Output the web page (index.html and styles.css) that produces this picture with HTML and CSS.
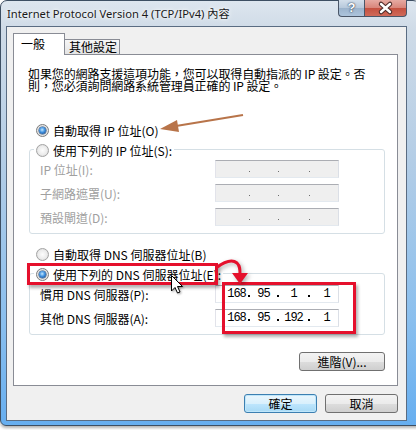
FILE: index.html
```html
<!DOCTYPE html>
<html lang="zh-Hant">
<head>
  <meta charset="UTF-8">
  <title>Internet Protocol Version 4 (TCP/IPv4) 內容</title>
  <link rel="stylesheet" href="styles.css">
</head>
<body>

  <div class="window">
    <div class="titlebar">
      <span class="title">Internet Protocol Version 4 (TCP/IPv4) 內容</span>
      <div class="caption-btns">
        <div class="cap help">?</div>
        <div class="cap close">
          <svg width="41" height="16" viewBox="0 0 41 16">
            <path d="M16 4 L25 12 M25 4 L16 12" stroke="#4a2a28" stroke-width="4.5" stroke-linecap="round"/>
            <path d="M16 4 L25 12 M25 4 L16 12" stroke="#fff" stroke-width="2.4" stroke-linecap="round"/>
          </svg>
        </div>
      </div>
    </div>

    <div class="client">
      <div class="tabs">
        <div class="tab active">一般</div>
        <div class="tab">其他設定</div>
      </div>

      <div class="panel">
        <div class="desc">
          <div class="line">如果您的網路支援這項功能，您可以取得自動指派的 IP 設定。否</div>
          <div class="line">則，您必須詢問網路系統管理員正確的 IP 設定。</div>
        </div>

        <div class="radio-row first"><span class="radio on"></span>自動取得 IP 位址(O)</div>

        <div class="group">
          <div class="legend"><span class="radio"></span>使用下列的 IP 位址(S):</div>
          <div class="field off">
            <span class="label">IP 位址(I):</span>
            <div class="ipbox"><span class="seg s1"></span><i></i><span class="seg s2"></span><i></i><span class="seg s3"></span><i></i><span class="seg s4"></span></div>
          </div>
          <div class="field off">
            <span class="label">子網路遮罩(U):</span>
            <div class="ipbox"><span class="seg s1"></span><i></i><span class="seg s2"></span><i></i><span class="seg s3"></span><i></i><span class="seg s4"></span></div>
          </div>
          <div class="field off">
            <span class="label">預設閘道(D):</span>
            <div class="ipbox"><span class="seg s1"></span><i></i><span class="seg s2"></span><i></i><span class="seg s3"></span><i></i><span class="seg s4"></span></div>
          </div>
        </div>

        <div class="radio-row dns-auto"><span class="radio"></span>自動取得 DNS 伺服器位址(B)</div>

        <div class="group dns">
          <div class="legend"><span class="radio on"></span>使用下列的 DNS 伺服器位址(E):</div>
          <div class="field">
            <span class="label">慣用 DNS 伺服器(P):</span>
            <div class="ipbox"><span class="seg s1">168</span><i></i><span class="seg s2">95</span><i></i><span class="seg s3">1</span><i></i><span class="seg s4">1</span></div>
          </div>
          <div class="field">
            <span class="label">其他 DNS 伺服器(A):</span>
            <div class="ipbox"><span class="seg s1">168</span><i></i><span class="seg s2">95</span><i></i><span class="seg s3">192</span><i></i><span class="seg s4">1</span></div>
          </div>
        </div>

        <div class="adv-row"><button class="btn adv">進階(V)...</button></div>
      </div>

      <div class="dialog-btns">
        <button class="btn default">確定</button>
        <button class="btn">取消</button>
      </div>
    </div>
  </div>

  <!-- annotations drawn over the dialog -->
  <div class="mark mark-radio"></div>
  <div class="mark mark-dns"></div>
  <svg class="overlay" width="416" height="430" viewBox="0 0 416 430">
    <g class="red-arrow">
      <path d="M216 268 C224 262 232 259 237 263 C240 266 240 269 240 274" fill="none" stroke="#e5102c" stroke-width="3"/>
      <polygon points="232,273 248,273 240,284" fill="#e5102c"/>
    </g>
    <g class="brown-arrow">
      <path d="M243 115 L176 126" stroke="#b8744a" stroke-width="2.2"/>
      <polygon points="160,129 179,132 177,120" fill="#b8744a"/>
    </g>
    <path class="cursor" d="M171.5 275.5 L171.5 291 L175 287.5 L177.5 293 L180 292 L177.5 286.5 L182.5 286.5 Z" fill="#fff" stroke="#000" stroke-width="1"/>
  </svg>

</body>
</html>
```

FILE: styles.css
```css
* { box-sizing: border-box; }

body {
  margin: 0;
  width: 416px;
  height: 430px;
  overflow: hidden;
  position: relative;
  background: #fff;
  font-family: "Noto Sans CJK TC", sans-serif;
  font-size: 12px;
  color: #000;
}

.window {
  width: 420px;
  height: 426px;
  border: 1px solid #3d4f63;
  border-radius: 7px 7px 0 6px;
  background: linear-gradient(to bottom, #dde6ef 0, #cfdbe7 28px, #b3cde6 160px, #8abfee 320px, #66aef0 426px);
  box-shadow: 0 2px 3px rgba(0,0,0,0.3);
  display: flex;
  flex-direction: column;
}

.titlebar {
  height: 25px;
  display: flex;
  align-items: flex-start;
}
.title {
  padding-left: 6px;
  line-height: 25px;
  font-family: "Noto Sans", "Noto Sans CJK TC", sans-serif;
  font-size: 11.2px;
  color: #1a1a1a;
  text-shadow: 0 0 6px #fff, 0 0 3px #fff;
}
.caption-btns {
  margin-left: auto;
  margin-right: 12px;
  margin-top: -1px;
  display: flex;
  height: 17px;
}
.cap {
  height: 17px;
  border: 1px solid #4a5668;
  border-top: none;
}
.cap.help {
  width: 26px;
  border-radius: 0 0 0 4px;
  border-right: none;
  background: linear-gradient(#d3dfeb 0, #b6c8db 50%, #9bb3cc 51%, #adc4dc 100%);
  color: #fff;
  font-family: "Liberation Sans", sans-serif;
  font-weight: bold;
  font-size: 13px;
  line-height: 16px;
  text-align: center;
  text-shadow: 0 0 2px #2c3e55, 0 0 1px #2c3e55;
}
.cap.close {
  width: 43px;
  border-radius: 0 0 4px 0;
  background: linear-gradient(#e6aaa2 0, #d88479 50%, #c4503f 51%, #d06a5a 100%);
}
.cap.close svg { display: block; }

.client {
  width: 401px;
  height: 395px;
  margin: 0 12px 0 5px;
  border: 1px solid #5a6c82;
  background: #f0f0f0;
  padding: 6px 8px 0 6px;
}

.tabs {
  display: flex;
  align-items: flex-end;
  height: 21px;
}
.tab {
  border: 1px solid #898c95;
  border-bottom: none;
}
.tab.active {
  position: relative;
  z-index: 1;
  width: 52px;
  height: 22px;
  margin-bottom: -1px;
  padding-left: 7px;
  line-height: 19px;
  background: #fff;
}
.tab:not(.active) {
  width: 56px;
  height: 15px;
  margin-left: -1px;
  padding-left: 4px;
  line-height: 13px;
  background: linear-gradient(#f6f6f6, #e4e4e4);
}

.panel {
  width: 385px;
  height: 332px;
  border: 1px solid #898c95;
  background: #fff;
  padding-left: 14px;
}

.desc {
  margin-top: 13px;
  letter-spacing: -0.1px;
}
.desc .line {
  height: 12px;
  line-height: 12px;
  white-space: nowrap;
}

.radio-row,
.legend {
  display: flex;
  align-items: center;
  gap: 4px;
  height: 14px;
  white-space: nowrap;
}
.radio-row { padding-left: 8px; }
.radio-row.first { margin-top: 31px; }
.radio-row.dns-auto { margin-top: 13px; }

.radio {
  position: relative;
  width: 13px;
  height: 13px;
  border-radius: 50%;
  border: 1px solid #a3a3a3;
  background: radial-gradient(circle, #fdfdfd 0, #ececec 55%, #cfcfcf 100%);
  flex: none;
}
.radio.on { border-color: #7c7c7c; }
.radio.on::after {
  content: "";
  position: absolute;
  left: 2px;
  top: 2px;
  width: 7px;
  height: 7px;
  border-radius: 50%;
  background: radial-gradient(circle at 45% 40%, #c4e8ff 0, #3f91e0 45%, #1a4c8e 85%);
  box-shadow: 0 0 0 0.5px #23466f;
}

.group {
  width: 356px;
  margin: 12px 0 0 1px;
  border: 1px solid #d5dfe5;
  border-radius: 3px;
  padding: 0 0 7px 10px;
}
.legend {
  width: fit-content;
  margin: -7px 0 0 -6px;
  padding: 0 2px;
  background: #fff;
}

.field {
  display: flex;
  align-items: center;
  height: 18px;
  margin-top: 6px;
}
.legend + .field { margin-top: 3px; }
.dns .legend + .field { margin-top: 4px; }
.field .label {
  width: 175px;
  white-space: nowrap;
}
.field.off .label { color: #a0a0a0; }

.ipbox {
  width: 124px;
  height: 18px;
  display: flex;
  padding-left: 9px;
  border: 1px solid;
  border-color: #abadb3 #dbdfe6 #e3e9ef #e2e3ea;
  background: #fff;
  font-family: "Liberation Mono", monospace;
  font-size: 12px;
  letter-spacing: -1px;
  line-height: 16px;
}
.field.off .ipbox { background: #efefef; }
.ipbox .seg { text-align: center; }
.ipbox .s1 { width: 23px; }
.ipbox .s2 { width: 27px; }
.ipbox .s3 { width: 29px; }
.ipbox .s4 { width: 28px; padding-left: 5px; }
.ipbox i {
  width: 2px;
  height: 2px;
  margin-top: 9px;
  background: #000;
}
.field.off .ipbox i {
  width: 1px;
  height: 1px;
  margin: 10px 0 0 1px;
  background: #6d6d6d;
}

.adv-row {
  display: flex;
  justify-content: flex-end;
  margin-top: 17px;
  padding-right: 12px;
}

.btn {
  width: 73px;
  height: 19px;
  padding: 0;
  border: 1px solid #707070;
  border-radius: 3px;
  background: linear-gradient(#f3f3f3 0, #ebebeb 50%, #dddddd 51%, #cfcfcf 100%);
  font-family: "Noto Sans CJK TC", sans-serif;
  font-size: 12px;
  line-height: 16px;
  color: #000;
}
.btn.adv { width: 86px; }
.btn.default {
  border-color: #3c7fb1;
  background: linear-gradient(#eaf6fd 0, #d9f0fc 50%, #bee6fd 51%, #a7d9f5 100%);
  box-shadow: inset 0 0 0 1px #bfe6fa;
}

.dialog-btns {
  display: flex;
  justify-content: flex-end;
  gap: 8px;
  margin-top: 8px;
}

/* annotations */
.mark {
  position: absolute;
  border: 3px solid #e5102c;
  box-shadow: 2px 3px 3px rgba(0,0,0,0.3);
}
.mark-radio { left: 27px; top: 263px; width: 191px; height: 22px; }
.mark-dns { left: 222px; top: 282px; width: 134px; height: 52px; }

.overlay {
  position: absolute;
  left: 0;
  top: 0;
}
.red-arrow { filter: drop-shadow(2px 2px 2px rgba(0,0,0,0.3)); }
.cursor { filter: drop-shadow(1px 1px 1px rgba(0,0,0,0.35)); }
```
